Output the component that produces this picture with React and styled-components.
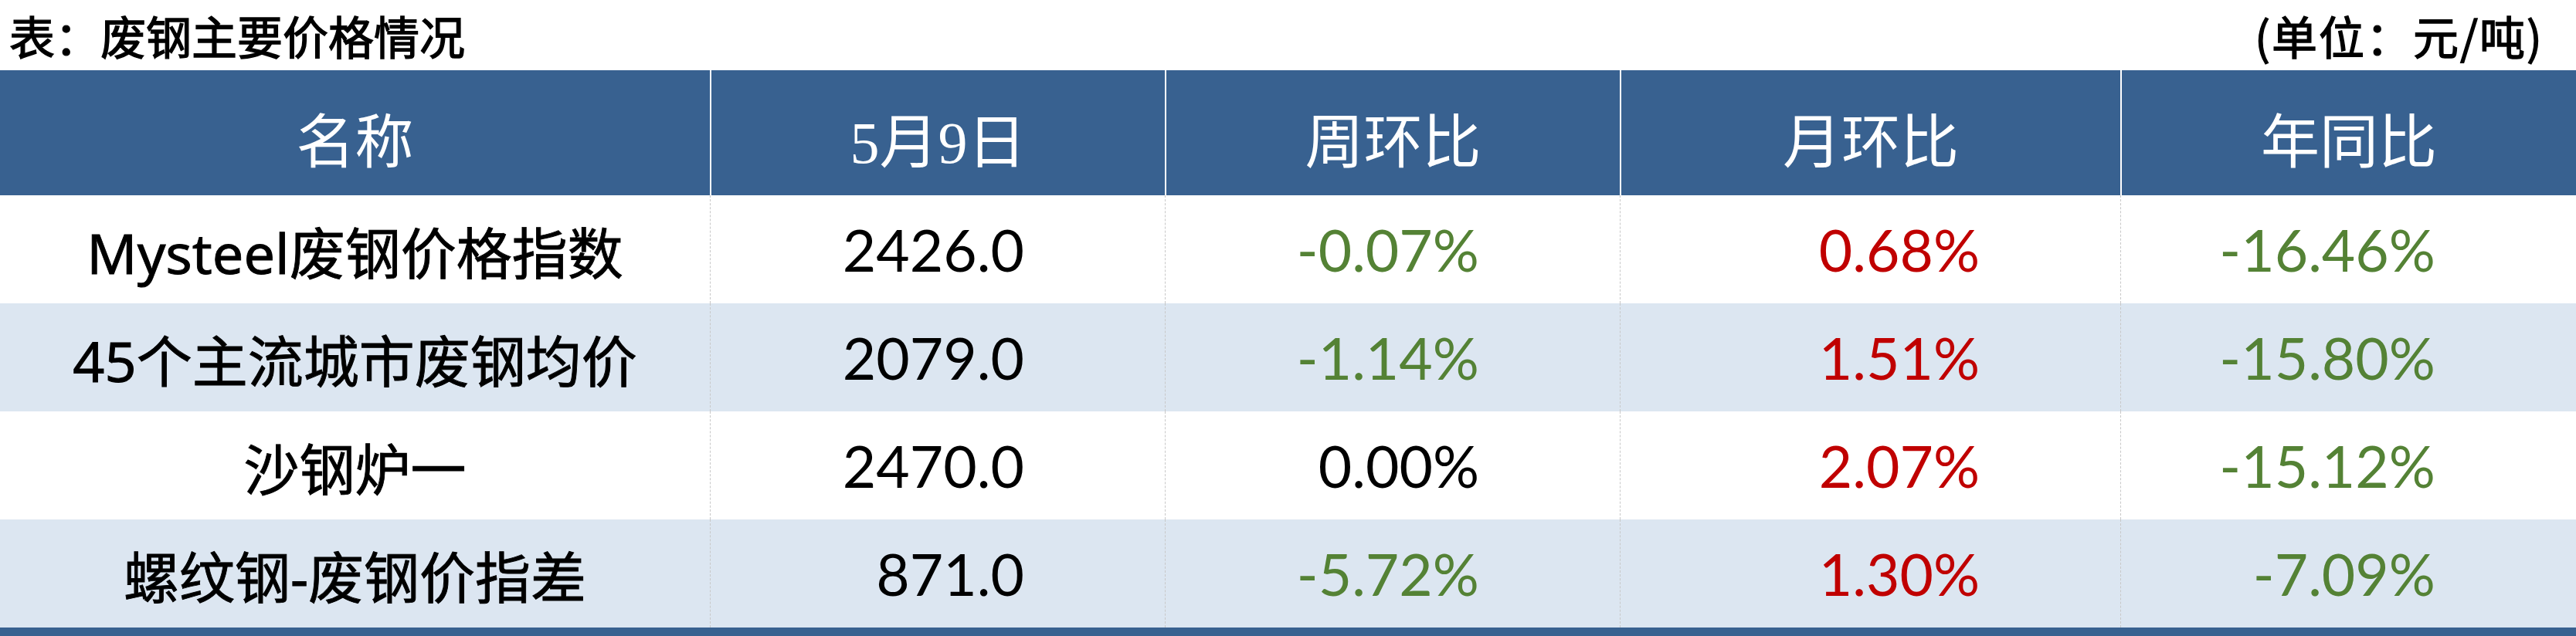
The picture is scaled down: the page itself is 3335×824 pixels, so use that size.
import styled, { createGlobalStyle } from 'styled-components';

const GlobalStyle = createGlobalStyle`
  html, body {
    margin: 0;
    padding: 0;
    background: #ffffff;
  }
`;

const COLS = '919px 589px 589px 648px 590px';

const Page = styled.div`
  width: 3335px;
  display: flex;
  flex-direction: column;
  background: #ffffff;
`;

const TitleBar = styled.div`
  height: 91px;
  display: flex;
  align-items: center;
  justify-content: space-between;
  padding: 0 42px 0 12px;
  font-family: "Noto Sans CJK SC", sans-serif;
  font-size: 59px;
  color: #000;
  -webkit-text-stroke: 1.4px #000;
`;

const Title = styled.span``;

const Unit = styled.span`
  letter-spacing: 2px;
`;

const Row = styled.div`
  display: grid;
  grid-template-columns: ${COLS};
  height: ${(p) => (p.$head ? '162px' : '140px')};
  background: ${(p) => (p.$head ? '#386190' : p.$alt ? '#dce6f1' : '#ffffff')};
`;

const HeadCell = styled.div`
  display: flex;
  align-items: center;
  justify-content: center;
  padding-top: 12px;
  box-sizing: border-box;
  border-left: ${(p) => (p.$first ? 'none' : '2px solid #ffffff')};
  color: #ffffff;
  font-family: "Liberation Serif", "Noto Sans CJK SC", serif;
  font-size: 76px;
`;

const NameCell = styled.div`
  display: flex;
  align-items: center;
  justify-content: center;
  font-family: "Noto Sans", "Noto Sans CJK SC", sans-serif;
  font-size: 72px;
  color: #000;
  -webkit-text-stroke: 0.9px #000;
`;

const NumCell = styled.div`
  display: flex;
  align-items: center;
  justify-content: flex-end;
  padding-right: 182px;
  box-sizing: border-box;
  border-left: 1px dashed #c8c8c8;
  font-family: Lato, "Liberation Sans", sans-serif;
  font-size: 75px;
  color: ${(p) => (p.$tone === 'up' ? '#c00000' : p.$tone === 'down' ? '#548235' : '#000000')};
`;

const BottomBar = styled.div`
  height: 11px;
  background: #386190;
`;

const headers = ['名称', '5月9日', '周环比', '月环比', '年同比'];

const rows = [
  ['Mysteel废钢价格指数', '2426.0', '-0.07%', '0.68%', '-16.46%'],
  ['45个主流城市废钢均价', '2079.0', '-1.14%', '1.51%', '-15.80%'],
  ['沙钢炉一', '2470.0', '0.00%', '2.07%', '-15.12%'],
  ['螺纹钢-废钢价指差', '871.0', '-5.72%', '1.30%', '-7.09%'],
];

const tone = (v, i) => {
  if (i === 0) return 'plain';
  if (v.startsWith('-')) return 'down';
  if (parseFloat(v) === 0) return 'plain';
  return 'up';
};

const App = () => {
  return (
    <Page>
      <GlobalStyle />
      <TitleBar>
        <Title>表：废钢主要价格情况</Title>
        <Unit>(单位：元/吨)</Unit>
      </TitleBar>
      <Row $head>
        {headers.map((h, i) => (
          <HeadCell key={h} $first={i === 0}>{h}</HeadCell>
        ))}
      </Row>
      {rows.map((r, ri) => (
        <Row key={r[0]} $alt={ri % 2 === 1}>
          <NameCell>{r[0]}</NameCell>
          {r.slice(1).map((v, i) => (
            <NumCell key={i} $tone={tone(v, i)}>{v}</NumCell>
          ))}
        </Row>
      ))}
      <BottomBar />
    </Page>
  );
};

export default App;
